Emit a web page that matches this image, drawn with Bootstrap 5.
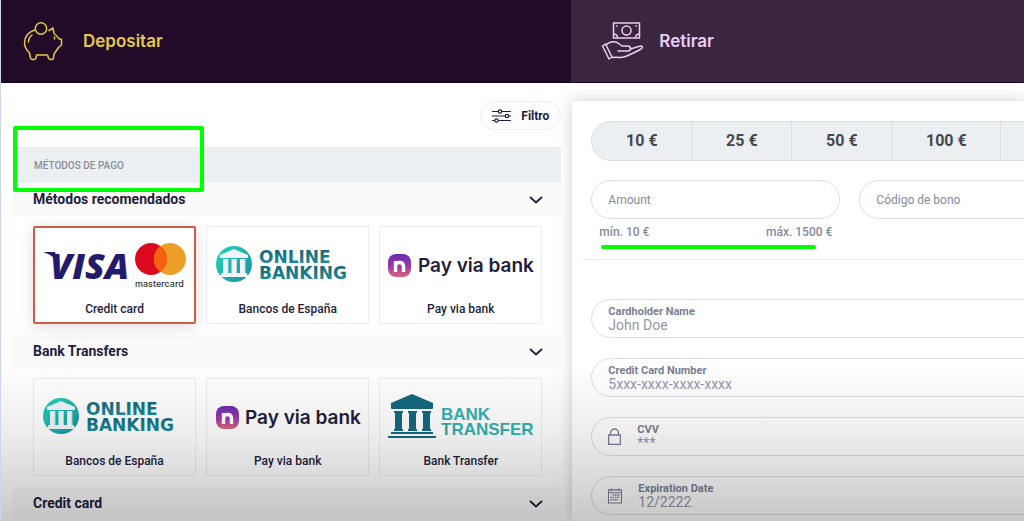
<!DOCTYPE html>
<html lang="es">
<head>
<meta charset="utf-8">
<meta name="viewport" content="width=device-width, initial-scale=1">
<title>Depositar</title>
<link rel="stylesheet" href="https://cdn.jsdelivr.net/npm/bootstrap@5.3.0/dist/css/bootstrap.min.css">
<style>
  :root { --ink: #231d3c; --slate: #858a9c; --line: #dcdee0; --mist: #ebeff1; --marker: #00ff00; }
  body { font-family: Roboto, "Liberation Sans", sans-serif; color: var(--ink); background: #fff; }
  .cashier { min-height: 100vh; height: 100vh; overflow: hidden; border-left: 1px solid #cdd5ea; }
  .split { display: grid; grid-template-columns: minmax(0, 1.26fr) minmax(0, 1fr); }
  .tab-btn { height: 83px; border: 0; border-bottom: 1px solid #160619; padding: 0 22px; background: #210b28; color: #e6c84a; font: 600 17px/24px Inter, sans-serif; text-align: left; }
  .tab-btn.alt { background: #3b2640; color: #eccdf3; padding-left: 30px; }
  .methods { padding: 18px 10px 0 12px; }
  .filter-btn { height: 29px; border: 1px solid #f0f0f4; border-radius: 15px; background: #fdfdff; padding: 0 11px; gap: 10px; font-size: 12px; font-weight: 700; color: var(--ink); }
  .title-bar { height: 36px; margin-top: 17px; padding: 0 21px; background: var(--mist); font-size: 10px; font-weight: 500; color: #8b8f99; }
  .marker-box { top: -21px; left: 0; width: 191px; height: 66px; border: 4px solid var(--marker); border-radius: 2px; }
  .group-btn { height: 33px; border: 0; background: #fafafa; padding: 0 18px 0 20px; font-size: 14px; font-weight: 700; color: var(--ink); }
  .tiles { display: grid; grid-template-columns: repeat(3, minmax(0, 1fr)); gap: 10px; padding: 10px 19px 11px 20px; }
  .tile { height: 98px; padding: 2px 0 0; border: 1px solid #ededf0; border-radius: 1px; background: transparent; font-size: 12px; line-height: 16px; font-weight: 500; color: var(--ink); overflow: hidden; }
  .tile.chosen { border: 2px solid #cf5c45; border-radius: 2px; background: #fff; box-shadow: 0 3px 16px rgba(0,0,0,.14); }
  .tile svg { display: block; margin: 0 auto 4px; }
  .panel { margin: 18px 0 0 1px; padding: 20px 0 0 19px; background: #fff; box-shadow: 0 0 14px rgba(0,0,0,.2); }
  .wide { width: 520px; }
  .amounts { height: 40px; border: 1px solid var(--line); border-radius: 20px; background: var(--mist); overflow: hidden; }
  .amounts button { flex: 0 0 100px; border: 0; border-right: 1px solid var(--line); background: transparent; font-size: 16px; font-weight: 700; color: #45474f; }
  .amounts button.big { flex-basis: 109px; }
  .pill { height: 39px; border: 1px solid var(--line); border-radius: 20px; padding: 0 16px; background: transparent; }
  .pill label { display: block; font-size: 11px; line-height: 13px; font-weight: 700; color: #7a7f93; }
  .pill input { display: block; width: 100%; height: 14px; padding: 0; border: 0; background: transparent; font-size: 14px; line-height: 14px; color: var(--slate); }
  input.pill { width: 249px; font-size: 12px; color: var(--slate); }
  ::placeholder { color: #9297ac; opacity: 1; }
  input.pill::placeholder { color: #858a9c; }
  .limits { width: 233px; margin-left: 8px; margin-top: 5px; font-size: 12px; line-height: 16px; font-weight: 500; color: var(--slate); }
  .marker-line { width: 215px; height: 4px; margin: 5px 0 0 10px; border-radius: 2px; background: var(--marker); }
  .rule { height: 1px; margin: 10px 0 39px -10px; background: #eeeeef; }
  .shade { height: 160px; background: linear-gradient(rgba(0,0,0,0), rgba(0,0,0,.07) 45%, rgba(0,0,0,.22)); pointer-events: none; }
  .brand-word { font-family: "DejaVu Sans", sans-serif; font-weight: 700; font-size: 17px; fill: url(#tealText); }
  .pay-word { font-family: Inter, sans-serif; font-weight: 600; font-size: 19px; fill: var(--ink); }
</style>
</head>
<body>
<svg width="0" height="0" class="position-absolute" aria-hidden="true">
  <defs>
    <linearGradient id="teal" x1="0" y1="0" x2="1" y2="1"><stop offset="0" stop-color="#22d8bd"/><stop offset="1" stop-color="#1a8c9b"/></linearGradient>
    <linearGradient id="tealText" x1="0" y1="0" x2="0" y2="1"><stop offset="0" stop-color="#15606f"/><stop offset="1" stop-color="#1b95a5"/></linearGradient>
    <linearGradient id="purple" x1="0" y1="0" x2="0" y2="1"><stop offset="0" stop-color="#6a2bb0"/><stop offset=".55" stop-color="#9c3ca6"/><stop offset="1" stop-color="#e0627a"/></linearGradient>
  </defs>
  <symbol id="bankmark" viewBox="0 0 36 36">
    <circle cx="18" cy="18" r="18" fill="url(#teal)"/>
    <path d="M18 3 32 9v3H4V9zM7 13h5v14H7zM15.500 13h5v14h-5zM24 13h5v14h-5zM5 27h26v2H5zM3 29h30v2H3z" fill="#f0f5f8"/>
    <path d="M12 13v14M20.500 13v14M29 13v14" stroke="#b9d9df"/>
  </symbol>
  <symbol id="paymark" viewBox="0 0 23 23">
    <rect width="23" height="23" rx="8" fill="url(#purple)"/>
    <path d="M7.500 18V7M7.500 12.500q0-4 4-4t4 4V18" fill="none" stroke="#fff" stroke-width="3.400"/>
  </symbol>
  <symbol id="chev" viewBox="0 0 14 8"><path d="m1 1 6 5.500L13 1" fill="none" stroke="#231d3c" stroke-width="1.800"/></symbol>
</svg>

<div class="cashier d-flex flex-column position-relative">
  <header class="split">
    <button type="button" class="tab-btn d-flex align-items-center">
      <svg width="40" height="40" viewBox="0 0 40 40" fill="none" stroke="#e6c84a" stroke-width="1.500" stroke-linejoin="round" stroke-linecap="round" aria-hidden="true"><circle cx="18" cy="7.500" r="5.700"/><path d="M12 9C5 11 1.500 16 1.500 22c0 5 3 8 5 10l1 5q.5 1.500 2 1.500h1.500q1.500 0 2-1.500l.5-3h11l1 3q.5 1.500 2 1.500h1.500q1.500 0 1.500-2l.5-3.500 4.500-6.500 3-2.500v-5.500l-3-1q-1.500-3-4.500-5L30 7l-4 2.500M5.500 21q0-4.500 3.500-7M31.500 16v2"/></svg>
      <span class="ms-3 ps-1">Depositar</span>
    </button>
    <button type="button" class="tab-btn alt d-flex align-items-center">
      <svg width="42" height="40" viewBox="0 0 42 40" fill="none" stroke="#eccdf3" stroke-width="1.500" stroke-linejoin="round" stroke-linecap="round" aria-hidden="true"><path d="M12.500 2h26v15h-26zM12.500 13q4 0 4 4M38.500 13q-4 0-4 4M15.500 5h.5M35 5h.5"/><circle cx="25.500" cy="9.500" r="4.500"/><path d="m1.500 25 3-2L11 36l-3 2zM5 24c4-4 8-4 12-2l4 3h5.500q3 0 3 2.500T26.500 30H17M29.500 28l8-2.500q4-1 4 .5 0 1.500-3 3L27 34.500q-4 2-8 2-4-.5-7.500 0"/></svg>
      <span class="ms-3">Retirar</span>
    </button>
  </header>

  <div class="split flex-grow-1">
    <main class="methods">
      <div class="d-flex justify-content-end">
        <button type="button" class="filter-btn d-flex align-items-center">
          <svg width="19" height="14" viewBox="0 0 19 14" fill="#fff" stroke="#231d3c" stroke-width="1.200" aria-hidden="true"><path d="M0 2.500h19M0 7h19M0 11.500h19"/><circle cx="8" cy="2.500" r="1.700"/><circle cx="15" cy="7" r="1.700"/><circle cx="4.500" cy="11.500" r="1.700"/></svg>
          Filtro
        </button>
      </div>
      <div class="title-bar position-relative d-flex align-items-center">
        MÉTODOS DE PAGO
        <span class="marker-box position-absolute"></span>
      </div>

      <button type="button" class="group-btn w-100 d-flex justify-content-between align-items-center">Métodos recomendados <svg width="14" height="8" aria-hidden="true"><use href="#chev"/></svg></button>
      <div class="tiles">
        <button type="button" class="tile chosen">
          <svg width="160" height="62" viewBox="0 0 160 62" role="img" aria-label="Visa, Mastercard">
            <path d="M8 17h12l4 12q-5-9-16-12z" fill="#231a6c"/>
            <text x="15" y="44" font-family="'Open Sans', sans-serif" font-weight="800" font-style="italic" font-size="36" fill="#231a6c">VISA</text>
            <circle cx="116" cy="24" r="16" fill="#dc0a1e"/><circle cx="135" cy="24" r="16" fill="#eca028"/>
            <path d="M125.500 11a16 16 0 0 1 0 26 16 16 0 0 1 0-26z" fill="#f45f10"/>
            <text x="100" y="52" font-family="Inter, sans-serif" font-weight="500" font-size="9" fill="#333">mastercard</text>
          </svg>
          Credit card
        </button>
        <button type="button" class="tile">
          <svg width="160" height="62" viewBox="0 0 160 62"><use href="#bankmark" x="8" y="11" width="36" height="36"/><text class="brand-word" x="51" y="28">ONLINE</text><text class="brand-word" x="51" y="44">BANKING</text></svg>
          Bancos de España
        </button>
        <button type="button" class="tile">
          <svg width="160" height="62" viewBox="0 0 160 62"><use href="#paymark" x="7" y="19" width="23" height="23"/><text class="pay-word" x="37" y="37">Pay via bank</text></svg>
          Pay via bank
        </button>
      </div>

      <button type="button" class="group-btn w-100 d-flex justify-content-between align-items-center">Bank Transfers <svg width="14" height="8" aria-hidden="true"><use href="#chev"/></svg></button>
      <div class="tiles">
        <button type="button" class="tile">
          <svg width="160" height="62" viewBox="0 0 160 62"><use href="#bankmark" x="8" y="11" width="36" height="36"/><text class="brand-word" x="51" y="28">ONLINE</text><text class="brand-word" x="51" y="44">BANKING</text></svg>
          Bancos de España
        </button>
        <button type="button" class="tile">
          <svg width="160" height="62" viewBox="0 0 160 62"><use href="#paymark" x="8" y="19" width="23" height="23"/><text class="pay-word" x="37" y="37">Pay via bank</text></svg>
          Pay via bank
        </button>
        <button type="button" class="tile">
          <svg width="160" height="62" viewBox="0 0 160 62" role="img" aria-label="Bank Transfer">
            <path d="M31 7 52 16v5q0 1-1 1H11q-1 0-1-1v-5zM13 24h9v2h-1v16h1v2h-9v-2h1V26h-1zM27 24h9v2h-1v16h1v2h-9v-2h1V26h-1zM41 24h9v2h-1v16h1v2h-9v-2h1V26h-1zM10 45h42v2H10zM7 49h48v2H7z" fill="#14697f"/>
            <g font-family="'Liberation Sans', sans-serif" font-weight="700" font-size="17" fill="#30b3b3"><text x="60" y="33">BANK</text><text x="60" y="48">TRANSFER</text></g>
          </svg>
          Bank Transfer
        </button>
      </div>

      <button type="button" class="group-btn w-100 d-flex justify-content-between align-items-center">Credit card <svg width="14" height="8" aria-hidden="true"><use href="#chev"/></svg></button>
    </main>

    <section class="panel overflow-hidden">
      <div class="wide">
        <div class="amounts d-flex">
          <button type="button">10 €</button><button type="button">25 €</button><button type="button">50 €</button><button type="button" class="big">100 €</button><button type="button" class="big" aria-label="Otro importe"></button>
        </div>
        <div class="d-flex" style="gap:19px;margin-top:19px">
          <input class="pill" type="text" placeholder="Amount" aria-label="Amount">
          <input class="pill" type="text" placeholder="Código de bono" aria-label="Código de bono">
        </div>
        <div class="limits d-flex justify-content-between"><span>mín. 10 €</span><span>máx. 1500 €</span></div>
        <div class="marker-line"></div>
        <div class="rule"></div>
        <form class="d-grid" style="gap:20px">
          <div class="pill d-flex align-items-center"><div class="flex-grow-1"><label for="holder">Cardholder Name</label><input id="holder" type="text" placeholder="John Doe"></div></div>
          <div class="pill d-flex align-items-center"><div class="flex-grow-1"><label for="number">Credit Card Number</label><input id="number" type="text" placeholder="5xxx-xxxx-xxxx-xxxx"></div></div>
          <div class="pill d-flex align-items-center gap-3">
            <svg width="13" height="17" viewBox="0 0 13 17" fill="none" stroke="#7a7f93" stroke-width="1.300" aria-hidden="true"><path d="M.7 7h11.600v9.300H.7zM2.500 7V5a4 4 0 0 1 8 0v2"/></svg>
            <div class="flex-grow-1"><label for="cvv">CVV</label><input id="cvv" type="text" placeholder="***"></div>
          </div>
          <div class="pill d-flex align-items-center gap-3">
            <svg width="14" height="16" viewBox="0 0 15 16" fill="none" stroke="#7a7f93" aria-hidden="true"><path d="M.5 1.500h14v14H.5zM.5 4.500h14M3.500 0v3M11.500 0v3" stroke-width="1.200"/><path d="M5 7h8M2.500 9.500H13M2.500 12H11" stroke-width="1.500" stroke-dasharray="1.700 .8"/></svg>
            <div class="flex-grow-1"><label for="exp">Expiration Date</label><input id="exp" type="text" placeholder="12/2222"></div>
          </div>
        </form>
      </div>
    </section>
  </div>
  <div class="shade position-absolute bottom-0 start-0 w-100"></div>
</div>
<script src="https://cdn.jsdelivr.net/npm/bootstrap@5.3.0/dist/js/bootstrap.bundle.min.js"></script>
</body>
</html>
